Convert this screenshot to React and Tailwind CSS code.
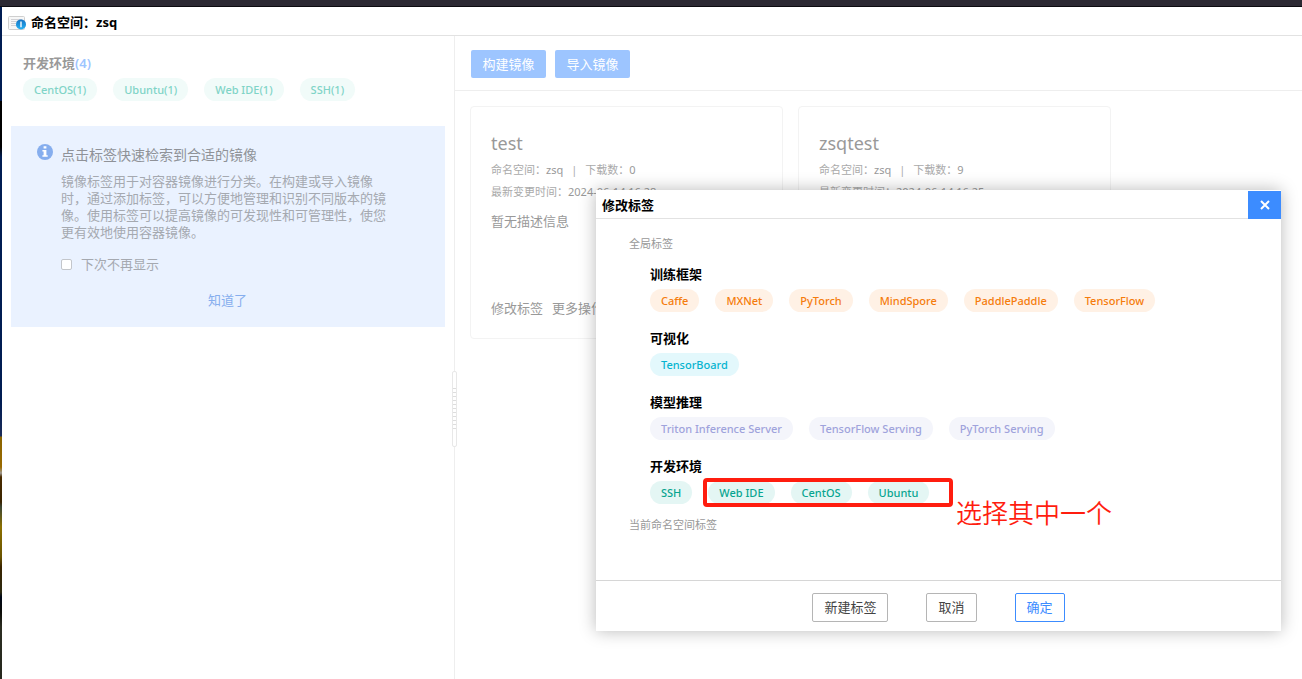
import React from 'react';

const TONES = {
  orange: 'bg-[#fff1e5] text-[#f57c0c]',
  cyan: 'bg-[#e3f8fc] text-[#06b4d0]',
  violet: 'bg-[#f4f5fb] text-[#9fa3dc]',
  green: 'bg-[#e4f6f4] text-[#08a590]',
  faded: 'bg-[#f1fbf9] text-[#80d4c7]',
};

const filterTags = ['CentOS(1)', 'Ubuntu(1)', 'Web IDE(1)', 'SSH(1)'];

const images = [
  { name: 'test', namespace: 'zsq', downloads: 0, updated: '2024-06-14 16:28' },
  { name: 'zsqtest', namespace: 'zsq', downloads: 9, updated: '2024-06-14 16:25' },
];

const tagGroups = [
  { title: '训练框架', tone: 'orange', tags: ['Caffe', 'MXNet', 'PyTorch', 'MindSpore', 'PaddlePaddle', 'TensorFlow'] },
  { title: '可视化', tone: 'cyan', tags: ['TensorBoard'] },
  { title: '模型推理', tone: 'violet', tags: ['Triton Inference Server', 'TensorFlow Serving', 'PyTorch Serving'] },
  { title: '开发环境', tone: 'green', tags: ['SSH', 'Web IDE', 'CentOS', 'Ubuntu'], marked: true },
];

const Tag = ({ tone, children }) => (
  <button type="button" className={`h-[23px] shrink-0 rounded-full px-[11px] text-[11px] leading-[23px] font-medium whitespace-nowrap ${TONES[tone]}`}>
    {children}
  </button>
);

const WindowIcon = () => (
  <svg width="18" height="14" viewBox="0 0 18 14" className="shrink-0">
    <defs>
      <linearGradient id="ball" x1="0" y1="0" x2="0" y2="1">
        <stop offset="0" stopColor="#1673c4" />
        <stop offset="1" stopColor="#25b0f2" />
      </linearGradient>
    </defs>
    <rect x="0.5" y="0.5" width="16" height="13" rx="1" fill="#f7f7f7" stroke="#cfcfcf" />
    <path d="M3 3.5h11M3 5.5h7M3 7.5h5M3 9.5h6" stroke="#d2d2d6" />
    <circle cx="13" cy="8.4" r="5" fill="url(#ball)" />
    <path d="M13 5.6v5.6" stroke="#fff" strokeWidth="1.4" />
  </svg>
);

const InfoIcon = () => (
  <svg width="16" height="16" viewBox="0 0 16 16" className="shrink-0">
    <circle cx="8" cy="8" r="8" fill="#86aeee" />
    <path d="M6.6 2.2h2.8v2.4H6.6zM5.4 6h4v5.2h1.3v1.6H5.4v-1.6h1.2V7.6H5.4z" fill="#fff" />
  </svg>
);

const Hint = () => (
  <section className="mx-[9px] mt-[25px] flex gap-2 bg-[#eaf2ff] pt-[18px] pr-[51px] pb-[17px] pl-[26px] text-[13px] text-[#a5a9b0]">
    <InfoIcon />
    <div className="flex-1">
      <h2 className="text-sm leading-[22px] text-[#8f9298]">点击标签快速检索到合适的镜像</h2>
      <p className="mt-[7px] leading-[17px]">
        镜像标签用于对容器镜像进行分类。在构建或导入镜像时，通过添加标签，可以方便地管理和识别不同版本的镜像。使用标签可以提高镜像的可发现性和可管理性，使您更有效地使用容器镜像。
      </p>
      <label className="mt-[13px] flex items-center gap-[9px] leading-5">
        <input type="checkbox" className="size-[11px] appearance-none rounded-xs border border-[#c3c6cb] bg-white" />
        下次不再显示
      </label>
      <button type="button" className="mt-4 block w-full leading-5 text-[#86aeee]">知道了</button>
    </div>
  </section>
);

const ImageCard = ({ image }) => (
  <article className="w-[313px] rounded border border-[#f3f3f3] px-5 pt-[23px] pb-5 text-[#999]">
    <h3 className="text-[18px] leading-[26px]">{image.name}</h3>
    <p className="mt-[5px] text-[11px] leading-[18px] text-[#aaa]">
      命名空间：<span className="text-[#999]">{image.namespace}</span>
      <span className="mx-2">|</span>
      下载数：<span className="text-[#999]">{image.downloads}</span>
    </p>
    <p className="mt-1 text-[11px] leading-[18px] text-[#aaa]">
      最新变更时间：<span className="text-[#999]">{image.updated}</span>
    </p>
    <p className="mt-[10px] text-[13px] leading-5">暂无描述信息</p>
    <div className="mt-[67px] flex gap-[9px] text-[13px] leading-5">
      <button type="button">修改标签</button>
      <button type="button">更多操作</button>
    </div>
  </article>
);

const TagDialog = () => (
  <div role="dialog" aria-label="修改标签" className="absolute top-[190px] right-[21px] w-[685px] bg-white shadow-[0_0_16px_rgba(0,0,0,0.28)]">
    <header className="flex h-[29px] items-end justify-between border-b border-[#e2e2e2] pl-[6px]">
      <h2 className="text-[13px] leading-[26px] font-bold text-black">修改标签</h2>
      <button type="button" aria-label="关闭" className="-mb-px flex h-7 w-[33px] items-center justify-center bg-[#3c8cff]">
        <svg width="10" height="10" viewBox="0 0 10 10">
          <path d="M1 1l8 8M9 1L1 9" stroke="#fff" strokeWidth="2" />
        </svg>
      </button>
    </header>
    <div className="px-[33px] pt-4 pb-[46px]">
      <p className="text-[11px] leading-[18px] text-[#999]">全局标签</p>
      <div className="mt-[11px] flex flex-col gap-4 pl-[21px]">
        {tagGroups.map((group) => (
          <section key={group.title}>
            <h3 className="text-[13px] leading-5 font-bold text-black">{group.title}</h3>
            <div className="relative mt-[5px] flex gap-4">
              {group.tags.map((tag) => (
                <Tag key={tag} tone={group.tone}>{tag}</Tag>
              ))}
              {group.marked && (
                <>
                  <div className="absolute -top-[3px] left-[53px] h-[29px] w-[250px] rounded-sm border-4 border-[#ff1d0f]" />
                  <p className="absolute top-3 left-[306px] text-[26px] leading-10 font-[350] whitespace-nowrap text-[#ff1d0f]">选择其中一个</p>
                </>
              )}
            </div>
          </section>
        ))}
      </div>
      <p className="mt-3 text-[11px] leading-[18px] text-[#999]">当前命名空间标签</p>
    </div>
    <footer className="flex justify-center gap-[38px] border-t border-[#d6d6d6] pt-3 pb-[9px] text-[13px] text-[#444]">
      <button type="button" className="h-[29px] rounded-xs border border-[#b5b5b5] px-[11px]">新建标签</button>
      <button type="button" className="h-[29px] rounded-xs border border-[#b5b5b5] px-[11px]">取消</button>
      <button type="button" className="h-[29px] rounded-xs border border-[#3c8cff] px-[11px] text-[#3c8cff]">确定</button>
    </footer>
  </div>
);

const App = () => (
  <div className="relative flex min-h-screen flex-col overflow-hidden bg-white font-['Noto_Sans','Noto_Sans_CJK_SC',sans-serif]">
    <div className="h-[7px] border-b border-[#0c0b10] bg-[#2c2933]" />
    <div className="flex flex-1">
      <div className="w-0.5 shrink-0 bg-[linear-gradient(#001c52_0_94px,#000_94px_140px,#001c52_150px_395px,#1b2c5a_429px,#8a6400_430px,#9a6a00_460px,#a09a90_466px,#4a2c00_470px,#3a2400_495px,#3c4634_500px,#8c7000_520px,#6a5400_550px,#3a2400_560px,#2c2a10_585px,#000818_590px,#0c0c08_605px,#2c2e22_620px,#26281e_100%)]" />
      <div className="flex min-w-0 flex-1 flex-col">
        <header className="flex h-[29px] items-center gap-[5px] border-b border-[#e2e2e2] pt-[3px] pl-[6px]">
          <WindowIcon />
          <h1 className="text-[13px] font-bold text-black">命名空间：zsq</h1>
        </header>
        <div className="flex flex-1">
          <aside className="relative w-[453px] shrink-0 border-r border-[#eee]">
            <h2 className="mt-[17px] px-[21px] text-[13px] leading-5 font-semibold text-[#999]">
              开发环境<span className="text-[#9dc5ff]">(4)</span>
            </h2>
            <div className="mt-[5px] flex gap-4 px-[21px]">
              {filterTags.map((tag) => (
                <Tag key={tag} tone="faded">{tag}</Tag>
              ))}
            </div>
            <Hint />
            <div className="absolute top-[335px] -right-[3px] flex h-[76px] w-[5px] items-center rounded-xs border border-[#e8e8e8] bg-white">
              <div className="h-[43px] w-full bg-[repeating-linear-gradient(#ddd_0_1px,#fff_1px_4px)]" />
            </div>
          </aside>
          <main className="min-w-0 flex-1">
            <div className="flex gap-[9px] border-b border-[#eee] pt-[14px] pr-4 pb-3 pl-4 text-[13px] text-white">
              <button type="button" className="h-7 w-[75px] rounded-xs bg-[#9dc5ff] pt-0.5">构建镜像</button>
              <button type="button" className="h-7 w-[75px] rounded-xs bg-[#9dc5ff] pt-0.5">导入镜像</button>
            </div>
            <div className="flex flex-wrap gap-[15px] px-[15px] pt-[15px]">
              {images.map((image) => (
                <ImageCard key={image.name} image={image} />
              ))}
            </div>
          </main>
        </div>
      </div>
    </div>
    <TagDialog />
  </div>
);

export default App;
